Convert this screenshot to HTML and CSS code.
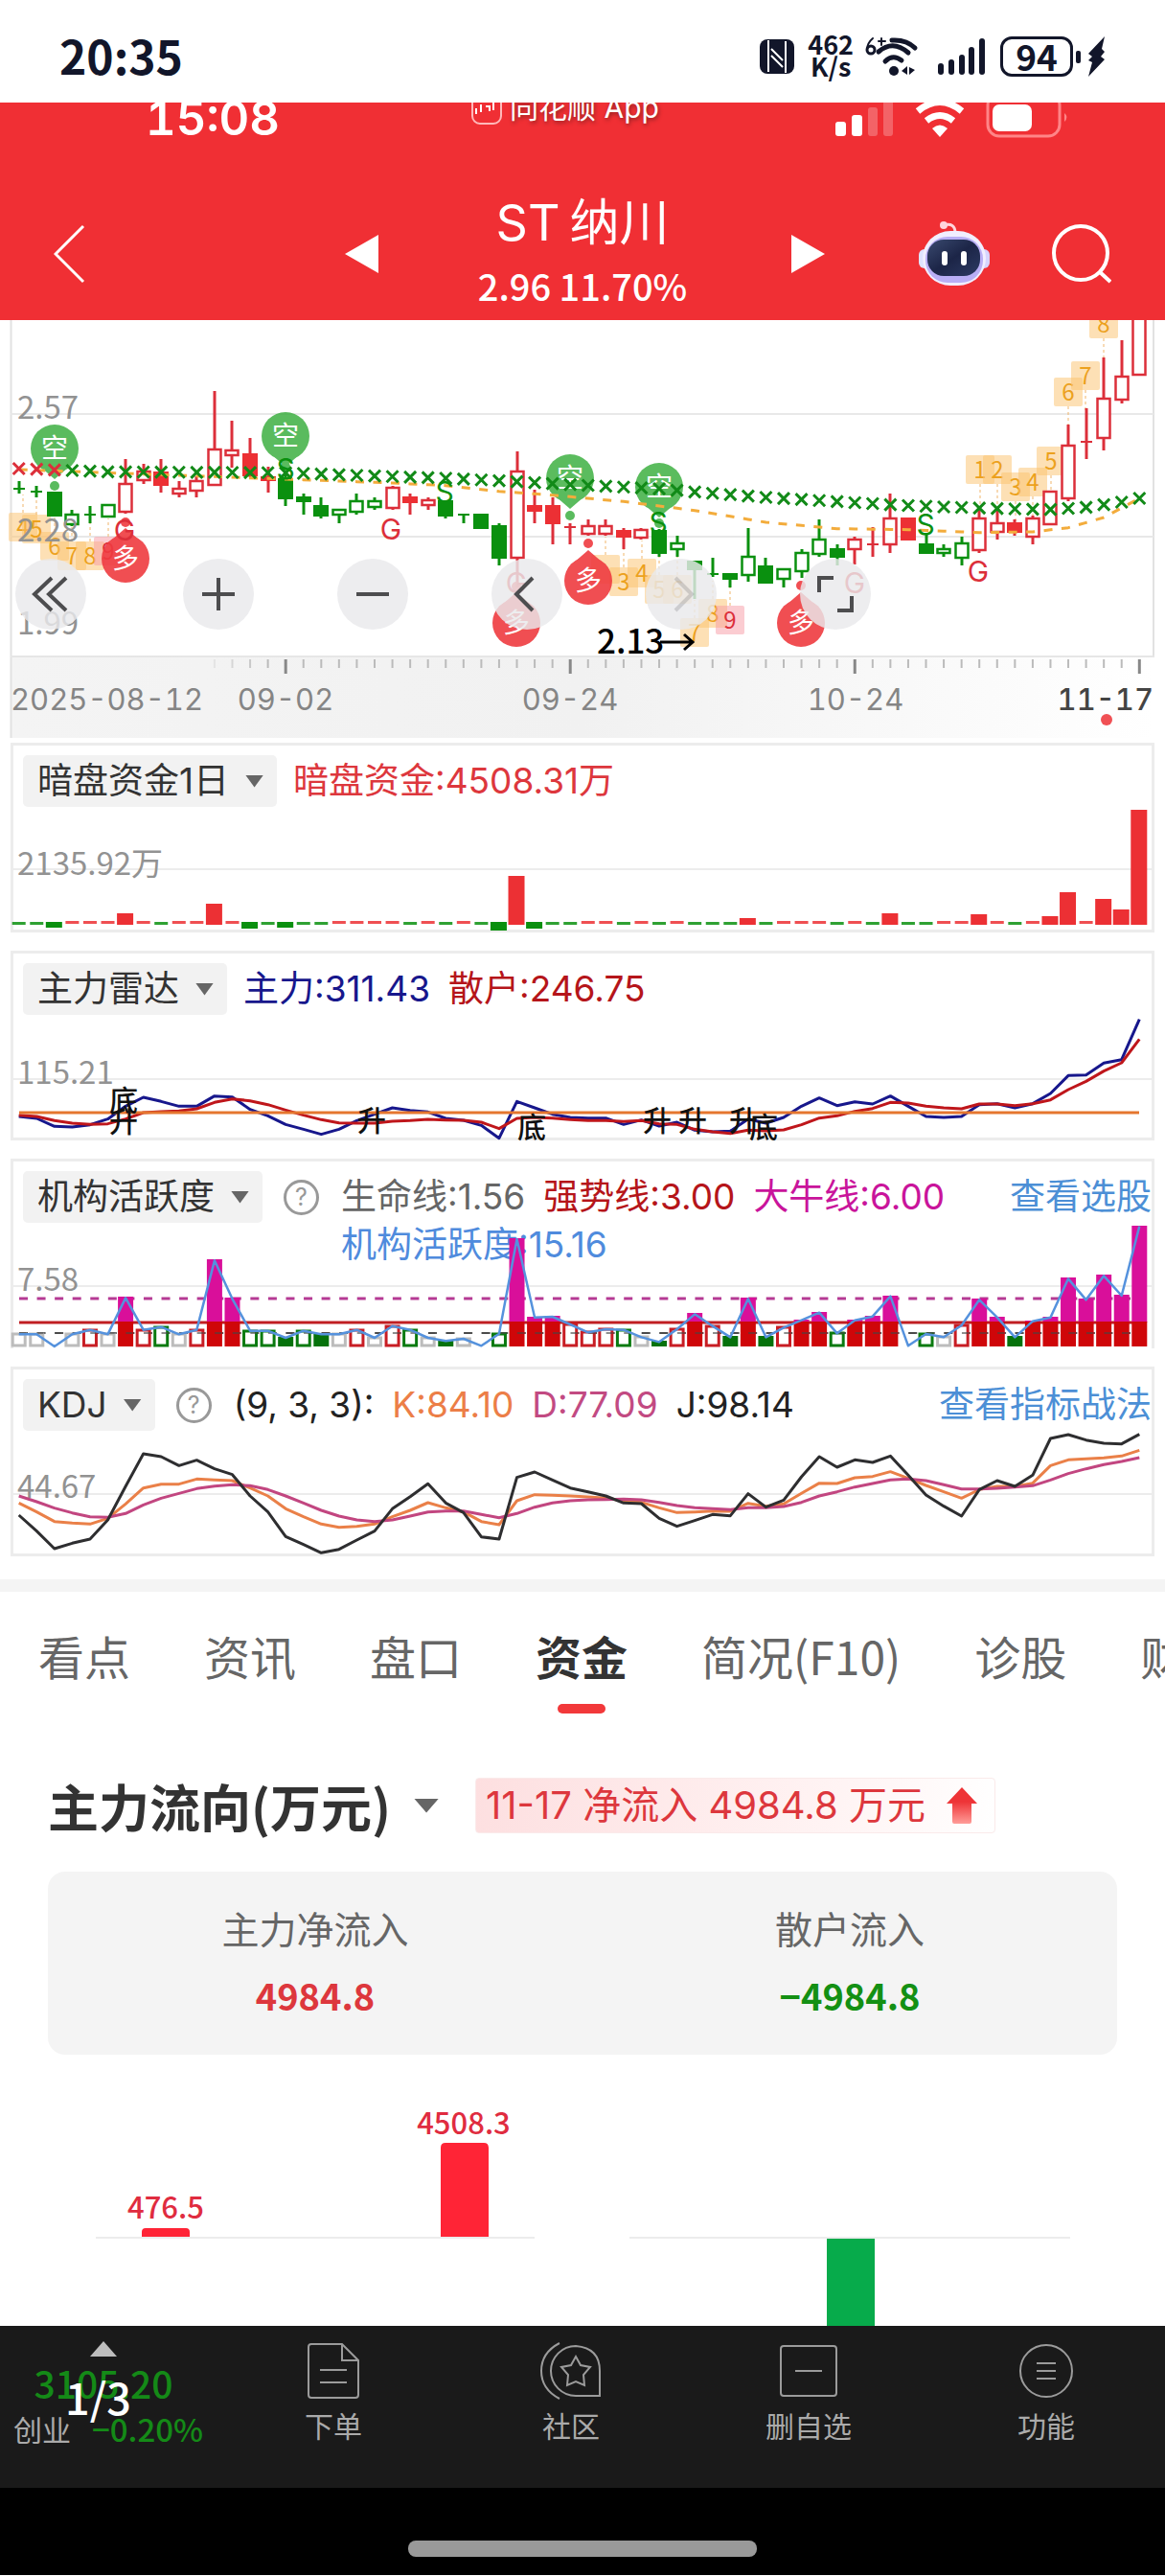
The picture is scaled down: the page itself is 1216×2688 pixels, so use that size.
FILE: index.html
```html
<!DOCTYPE html>
<html lang="zh-CN">
<head>
<meta charset="utf-8">
<meta name="viewport" content="width=device-width, initial-scale=1">
<title>ST纳川</title>
<link rel="stylesheet" href="styles.css">
</head>
<body>
<div class="status">
  <span class="status-time">20:35</span>
  <svg class="status-nfc" width="36" height="36" viewBox="0 0 36 36"><rect width="36" height="36" rx="8" fill="#12162a"/><path d="M9 1v33M27 2v33M12 10l12 12M12 17l12 12" stroke="#fff" stroke-width="2" fill="none"/></svg>
  <span class="status-speed">462<br>K/s</span>
  <svg class="status-wifi" width="56" height="44" viewBox="0 0 56 44" fill="none" stroke="#12162a" stroke-width="5" stroke-linecap="round"><path d="M28 5Q43 4 52 13M14 17Q29 4 45 18M21 27Q29 19 38 26"/><circle cx="30" cy="37" r="5" fill="#12162a" stroke="none"/><path d="M38 37l6-5v9zM46 33v8l6-5z" fill="#12162a" stroke="none"/><path d="M8 3Q2 8 2 15M14 6h7M17 3v7" stroke-width="2"/><circle cx="6" cy="15" r="4" stroke-width="3"/></svg>
  <svg class="status-signal" width="50" height="38" viewBox="0 0 50 38" fill="#12162a"><rect y="26" width="6" height="12" rx="3"/><rect x="11" y="22" width="6" height="16" rx="3"/><rect x="22" y="17" width="6" height="21" rx="3"/><rect x="32" y="9" width="6" height="29" rx="3"/><rect x="43" width="6" height="38" rx="3"/></svg>
  <span class="status-battery">94</span>
  <svg class="status-bolt" width="32" height="42" viewBox="0 0 32 42" fill="#12162a"><rect y="15" width="5" height="13" rx="2"/><path d="M30 0L13 18l4 3-4 4 4 2-4 15 17-18-4-3 4-5-3-3z"/></svg>
</div>

<header class="top">
  <div class="ios">
    <span class="ios-time">15:08</span>
    <span class="ios-app"><svg width="32" height="30" viewBox="0 0 32 30" fill="none" stroke="#ffb9ba" stroke-width="2"><rect x="1" y="-12" width="30" height="34" rx="8"/><path d="M5 6v6M10 2v8M15 4h4v5M23 0v8" stroke="#fff"/></svg>同花顺 App</span>
    <svg class="ios-icons" width="246" height="38" viewBox="870 107 246 38"><g fill="#fff"><rect x="872" y="127" width="11" height="15" rx="3"/><rect x="889" y="120" width="11" height="22" rx="3"/><g opacity=".25"><rect x="906" y="112" width="10" height="30" rx="3"/><rect x="922" y="100" width="10" height="42" rx="3"/></g><path d="M973 134q8-7 16 0l-8 9z"/><rect x="1036" y="109" width="41" height="28" rx="7"/></g><path d="M967 126q14-11 28 0M958 116q23-19 46 0" fill="none" stroke="#fff" stroke-width="7"/><rect x="1031" y="98" width="75" height="44" rx="12" fill="none" stroke="#ff8587" stroke-width="3"/><path d="M1111 118q5 4 0 9z" fill="#ff8587"/></svg>
  </div>
  <div class="nav">
    <div class="nav-left">
      <button aria-label="返回"><svg width="34" height="62" viewBox="0 0 34 62"><path d="M31 2L2 31l29 29" fill="none" stroke="#fff" stroke-width="3"/></svg></button>
      <button aria-label="上一只"><svg width="35" height="40" viewBox="0 0 35 40"><path d="M35 0v40L0 20z" fill="#fff"/></svg></button>
    </div>
    <div class="nav-title"><h1><span>ST</span><span>纳川</span></h1><p>2.96 11.70%</p></div>
    <div class="nav-right">
      <button aria-label="下一只"><svg width="35" height="40" viewBox="0 0 35 40"><path d="M0 0v40l35-20z" fill="#fff"/></svg></button>
      <button class="nav-robot" aria-label="助手"><svg width="76" height="70" viewBox="0 0 76 70"><defs><linearGradient id="face" x1="0" y1="0" x2="1" y2="1"><stop offset="0" stop-color="#3a4a70"/><stop offset=".5" stop-color="#1c2547"/><stop offset="1" stop-color="#2c3a63"/></linearGradient></defs><path d="M27 5q12-3 12 8" fill="none" stroke="#ffd5dc" stroke-width="3"/><circle cx="27" cy="5" r="4" fill="#ffd5dc"/><rect x="1" y="30" width="14" height="20" rx="6" fill="#dfe3ff"/><rect x="61" y="30" width="14" height="20" rx="6" fill="#d6d4ff"/><rect x="5" y="11" width="66" height="57" rx="29" fill="#f1eeff"/><rect x="8" y="17" width="60" height="48" rx="23" fill="#b9aef5"/><rect x="10" y="20" width="55" height="38" rx="17" fill="url(#face)"/><rect x="25" y="32" width="6" height="15" rx="3" fill="#fff"/><rect x="45" y="32" width="6" height="15" rx="3" fill="#fff"/></svg></button>
      <button aria-label="搜索"><svg width="62" height="62" viewBox="0 0 62 62" fill="none" stroke="#fff" stroke-width="4"><circle cx="30" cy="30" r="28"/><path d="M49 49l12 11"/></svg></button>
    </div>
  </div>
</header>

<main>
  <section class="kline">
    <svg id="kline" viewBox="0 334 1216 441" role="img" aria-label="日K线"></svg>
    <div class="tools">
      <button aria-label="最早"><svg viewBox="0 0 74 74"><path d="M38 20L20 37l18 17M53 20L35 37l18 17"/></svg></button>
      <button aria-label="放大"><svg viewBox="0 0 74 74"><path d="M37 20v34M20 37h34"/></svg></button>
      <button aria-label="缩小"><svg viewBox="0 0 74 74"><path d="M20 37h34"/></svg></button>
      <button aria-label="左移"><svg viewBox="0 0 74 74"><path d="M43 20L26 37l17 17"/></svg></button>
      <button aria-label="右移" disabled><svg viewBox="0 0 74 74"><path d="M31 20l17 17-17 17"/></svg></button>
      <button aria-label="全屏"><svg viewBox="0 0 74 74"><path d="M20 35V20h15M39 54h15V39"/></svg></button>
    </div>
  </section>

  <div class="panels">
    <section class="panel">
      <div class="panel-head"><button class="chip">暗盘资金1日<i class="caret"></i></button><div class="values"><span class="red">暗盘资金:4508.31万</span></div></div>
      <svg id="funds" viewBox="11 775 1194 198"></svg>
    </section>
    <section class="panel">
      <div class="panel-head"><button class="chip">主力雷达<i class="caret"></i></button><div class="values"><span class="navy">主力:311.43</span><span class="dark-red">散户:246.75</span></div></div>
      <svg id="radar" viewBox="11 991 1194 198"></svg>
    </section>
    <section class="panel">
      <div class="panel-head"><button class="chip">机构活跃度<i class="caret"></i></button><button class="help" aria-label="说明">?</button><div class="values"><span class="grey">生命线:1.56</span><span class="dark-red">强势线:3.00</span><span class="magenta">大牛线:6.00</span><span class="blue wrap">机构活跃度:15.16</span></div><a href="#stocks">查看选股</a></div>
      <svg id="active" viewBox="11 1208 1194 198"></svg>
    </section>
    <section class="panel">
      <div class="panel-head"><button class="chip">KDJ<i class="caret"></i></button><button class="help" aria-label="说明">?</button><div class="values"><span class="black">(9, 3, 3):</span><span class="orange">K:84.10</span><span class="pink">D:77.09</span><span class="black">J:98.14</span></div><a href="#kdj-guide">查看指标战法</a></div>
      <svg id="kdj" viewBox="11 1425 1194 198"></svg>
    </section>
  </div>

  <nav class="tabs">
    <a href="#view">看点</a><a href="#news">资讯</a><a href="#quote">盘口</a><a class="active" href="#money" aria-current="page">资金</a><a href="#f10">简况(F10)</a><a href="#diagnose">诊股</a><a href="#finance">财务</a>
  </nav>

  <section class="flow">
    <div class="flow-head">
      <h2>主力流向(万元)</h2><i class="caret"></i>
      <p class="tag">11-17 净流入 4984.8 万元<svg width="32" height="38" viewBox="0 0 32 38"><defs><linearGradient id="up" x1="0" y1="0" x2="0" y2="1"><stop offset=".4" stop-color="#ee3437"/><stop offset="1" stop-color="#ff9c98"/></linearGradient></defs><path d="M16 0l16 17h-6v19q0 2-2 2H8q-2 0-2-2V17H0z" fill="url(#up)"/></svg></p>
    </div>
    <dl class="card">
      <div><dt>主力净流入</dt><dd class="red">4984.8</dd></div>
      <div><dt>散户流入</dt><dd class="green">−4984.8</dd></div>
    </dl>
  </section>
  <svg class="bars" viewBox="0 2145 1216 283">
    <path d="M100 2336h458M657 2336h460" stroke="#ececec" stroke-width="2"/>
    <path d="M148 2335v-5q0-4 4-4h42q4 0 4 4v5zM460 2335v-93q0-5 5-5h40q5 0 5 5v93z" fill="#ff2436"/>
    <path d="M863 2337h50v91h-50z" fill="#07ab4b"/>
    <g class="bar-label"><text x="173" y="2316">476.5</text><text x="484" y="2228">4508.3</text></g>
  </svg>
</main>

<footer>
  <div class="dock">
    <div class="index">
      <svg width="28" height="16" viewBox="0 0 28 16"><path d="M14 0l14 16H0z" fill="#bdbdbd"/></svg>
      <strong>3105.20</strong>
      <p><span>创业</span><em>−0.20%</em></p>
      <span class="pager">1/3</span>
    </div>
    <button><svg width="54" height="58" viewBox="0 0 54 58"><path d="M4 1h32l17 17v36q0 3-3 3H4q-3 0-3-3V4q0-3 3-3zM36 1v17h17M13 28h28M13 41h28"/></svg>下单</button>
    <button><svg width="64" height="60" viewBox="0 0 64 60"><path d="M20 1Q1 11 1 30t19 29M37 4a26 26 0 1 0 0 52h25V30Q62 6 37 4z"/><path d="M37 15l5 9 10 2-7 8 1 11-9-4-9 4 1-11-7-8 10-2z"/></svg>社区</button>
    <button><svg width="60" height="58" viewBox="0 0 60 58"><rect x="1" y="3" width="58" height="52" rx="3"/><path d="M16 29h28"/></svg>删自选</button>
    <button><svg width="58" height="58" viewBox="0 0 58 58"><circle cx="29" cy="29" r="27"/><path d="M19 21h20M19 29h20M19 37h20"/></svg>功能</button>
  </div>
  <div class="home"><i></i></div>
</footer>
<script src="charts.js"></script>
</body>
</html>
```
FILE: styles.css
```css
* { box-sizing: border-box; margin: 0; padding: 0; }
body { background: #fff; color: #333; font-family: Inter, "Noto Sans CJK SC", sans-serif; font-size: 36px; overflow-x: hidden; }
button { border: 0; background: none; font: inherit; color: inherit; cursor: pointer; }
a { text-decoration: none; color: inherit; }
svg { display: block; }
i, em { font-style: normal; }

.status { display: flex; align-items: center; height: 107px; padding: 10px 61px 0 62px; color: #12162a; font-family: "Noto Sans CJK SC", sans-serif; font-weight: 700; }
.status-time { margin: 0 auto 4px 0; font-size: 48px; line-height: 48px; }
.status-speed { margin: 0 12px 4px 14px; font-size: 27px; line-height: 23px; text-align: center; }
.status-signal { margin: 0 15px 0 20px; }
.status-battery { width: 76px; height: 42px; margin-right: 3px; border: 3px solid; border-radius: 12px; font-size: 37px; line-height: 34px; text-align: center; }

.top { background: #f02f34; color: #fff; overflow: hidden; }
.ios { display: flex; justify-content: space-between; align-items: flex-start; height: 89px; padding: 0 100px 0 152px; }
.ios-time { font-size: 49px; font-weight: 600; line-height: 34px; font-variant-numeric: tabular-nums; }
.ios-app { display: flex; align-items: flex-start; gap: 8px; margin-left: 18px; font-size: 30px; line-height: 10px; text-shadow: 1px 2px 4px #8a2022; }
.nav { display: grid; grid-template-columns: 1fr auto 1fr; align-items: center; height: 138px; }
.nav button { display: block; }
.nav-left { display: flex; justify-content: space-between; padding: 0 104px 0 56px; }
.nav-title { padding-bottom: 8px; text-align: center; }
.nav-title h1 { display: flex; justify-content: center; gap: 10px; font-size: 52px; font-weight: 400; line-height: 74px; }
.nav-title p { font-family: "Noto Sans CJK SC", sans-serif; font-size: 38px; font-weight: 500; line-height: 56px; }
.nav-right { display: flex; align-items: center; gap: 64px; padding: 0 56px 0 109px; }
.nav-robot { margin-left: auto; }

.kline { position: relative; }
.kline > svg { width: 100%; }
.tools { position: absolute; left: 16px; top: 249px; display: flex; gap: 87px; }
.tools button { width: 74px; height: 74px; border-radius: 50%; background: rgba(233, 233, 235, .82); }
.tools button:first-child { margin-right: 14px; }
.tools path { fill: none; stroke: #4d4d4f; stroke-width: 4; }
.tools button:disabled path { opacity: .2; }

text { font-family: "Noto Sans CJK SC", sans-serif; }
.axis { font-size: 33px; fill: #929292; }
.date { font-family: Inter, sans-serif; font-size: 31px; font-variant-numeric: tabular-nums; fill: #858585; }
.date-now { font-weight: 500; fill: #444; }
.price { font-size: 35px; font-weight: 500; fill: #000; }
.mark { font-family: Inter, sans-serif; font-size: 30px; text-anchor: middle; }
.bubble { font-size: 28px; fill: #fff; text-anchor: middle; }
.count { font-size: 24px; text-anchor: middle; }
.sign { font-size: 30px; font-weight: 500; text-anchor: middle; fill: #111; }

.panels { display: grid; gap: 19px; padding: 0 11px; }
.panel { display: grid; box-shadow: inset 0 0 0 3px #ececec; }
.panel > * { grid-area: 1 / 1; min-width: 0; }
.panel > svg { width: 100%; pointer-events: none; z-index: 1; }
.panel-head { display: flex; align-items: flex-start; padding: 13px 3px 0 13px; line-height: 54px; white-space: nowrap; }
.chip { display: flex; align-items: center; gap: 17px; padding: 0 14px 0 15px; border-radius: 5px; background: #f2f2f2; font-size: 37px; line-height: 54px; }
.caret { width: 19px; height: 13px; background: #666; clip-path: polygon(0 0, 100% 0, 50% 100%); }
.help { width: 37px; height: 37px; margin: 9px 6px 0 22px; border: 3px solid #999; border-radius: 50%; color: #999; font-size: 25px; line-height: 31px; }
.values { display: flex; flex-wrap: wrap; flex: 1; column-gap: 19px; padding-left: 17px; font-size: 37px; white-space: nowrap; }
.wrap { flex-basis: 100%; line-height: 46px; }
.panel-head a { font-size: 37px; color: #4c8fd6; }
.red { color: #dd373d; }
.navy { color: #17178c; }
.dark-red { color: #b5151a; }
.grey { color: #666; }
.magenta { color: #c9149b; }
.blue { color: #4f8bdd; }
.black { color: #222; }
.orange { color: #ec7e47; }
.pink { color: #c24a82; }
.green { color: #149014; }

.tabs { display: flex; gap: 77px; margin-top: 24px; padding: 31px 0 0 40px; border-top: 13px solid #f4f4f4; overflow: hidden; color: #666; font-family: "Noto Sans CJK SC", sans-serif; font-size: 48px; line-height: 70px; white-space: nowrap; }
.tabs .active { color: #333; font-weight: 700; }
.tabs .active::after { content: ""; display: block; width: 50px; height: 10px; margin: 16px auto 0; border-radius: 5px; background: #f2383a; }

.flow { padding: 67px 50px 0; }
.flow-head { display: flex; align-items: center; }
.flow h2 { font-family: "Noto Sans CJK SC", sans-serif; font-size: 53px; font-weight: 700; line-height: 58px; }
.flow-head .caret { width: 26px; height: 15px; margin: 0 38px 0 24px; }
.tag { display: flex; align-items: center; gap: 22px; padding: 0 18px 0 10px; border: 1px solid #faeaea; border-radius: 4px; background: linear-gradient(100deg, #fddfe0, #fff4f4 70%, #fff); color: #dd373d; font-size: 40px; line-height: 56px; }
.card { display: grid; grid-template-columns: 1fr 1fr; margin-top: 40px; padding: 26px 0 28px; border-radius: 18px; background: #f4f4f4; font-size: 39px; line-height: 69px; text-align: center; }
.card dt { color: #666; }
.card dd { font-family: "Noto Sans CJK SC", sans-serif; font-size: 38px; font-weight: 700; line-height: 68px; }
.bars { width: 100%; }
.bar-label { font-size: 31px; font-weight: 500; fill: #e02c40; text-anchor: middle; }

footer { background: #000; }
.dock { display: grid; grid-template-columns: 224fr 248fr 248fr 248fr 248fr; height: 169px; background: #1a1a1a; color: #aaa; font-size: 30px; line-height: 40px; }
.dock button { display: flex; flex-direction: column; align-items: center; gap: 8px; padding-top: 17px; }
.dock button svg { height: 60px; fill: none; stroke: #9b9b9b; stroke-width: 2; }
.index { position: relative; display: flex; flex-direction: column; align-items: center; padding: 16px 8px 0 0; font-family: "Noto Sans CJK SC", sans-serif; }
.index strong { margin-top: 7px; color: #148a17; font-size: 39px; font-weight: 500; }
.index p { display: flex; gap: 22px; margin: 8px 0 0 10px; white-space: nowrap; }
.index em { color: #148a17; font-size: 33px; font-weight: 500; }
.pager { position: absolute; left: 68px; top: 49px; color: #fff; font-size: 45px; font-weight: 500; line-height: 50px; }
.home { height: 91px; padding-top: 55px; }
.home i { display: block; width: 364px; height: 17px; margin: 0 auto; border-radius: 8px; background: #999; }
```
FILE: charts.js
```js
const RED = '#dc2f3a', SOLID = '#ec3034', GREEN = '#0a900f';
const X = i => 19.7 + 18.565 * i;
const draw = (id, parts) => { document.getElementById(id).innerHTML = parts.join(''); };
const rect = (x, y, w, h, a) => `<rect x="${x}" y="${y}" width="${w}" height="${h}" ${a}/>`;
const text = (x, y, s, a) => `<text x="${x}" y="${y}" ${a}>${s}</text>`;
const line = (x1, y1, x2, y2, c, w, a = '') => `<line x1="${x1}" y1="${y1}" x2="${x2}" y2="${y2}" stroke="${c}" stroke-width="${w}" ${a}/>`;
const curve = (v, y0, c, w, a = '') => `<polyline points="${v.map((n, i) => X(i) + ',' + (y0 + n / 3)).join(' ')}" fill="none" stroke="${c}" stroke-width="${w}" stroke-linejoin="round" ${a}/>`;
const nums = s => s.trim().split(/\s+/).map(Number);

/* Fill a sparse list of [index, value] into one value per day. */
function spread(keys) {
  const out = [];
  for (let k = 0; k < keys.length - 1; k++) {
    const [a, va] = keys[k], [b, vb] = keys[k + 1];
    for (let i = a; i < b; i++) out.push(va + (vb - va) * (i - a) / (b - a));
  }
  out.push(keys[keys.length - 1][1]);
  return out;
}

/* Candles: colour (r/g), kind (h hollow, f filled, l line), body top, body bottom, wick top, wick bottom. */
const candles = `gl 540 540 517 555|gl 548 548 530 568|gf 550 626 550 626|gh 620 650 605 658|gl 620 620 595 648|gh 592 628 592 628|rh 524 612 448 618|rh 485 512 462 525|rf 485 530 448 553|rh 540 555 515 567|rh 515 545 500 567|rh 418 528 235 530|rh 419 435 328 475|rf 430 500 380 505|rf 500 516 470 553|gf 508 572 490 594|gf 563 583 555 620|gf 592 626 568 634|gh 606 622 606 647|gh 578 612 555 620|gh 580 597 568 607|rh 538 600 530 607|rf 563 585 555 620|rh 577 592 568 607|gf 577 626 577 634|gl 620 620 620 647|gf 617 665 617 665|gf 655 758 648 780|rh 485 755 422 850|rf 590 612 543 648|rf 590 650 568 713|rl 660 660 648 713|rh 658 680 635 688|rh 658 680 635 688|rf 670 692 662 728|rh 670 692 662 700|gf 670 745 665 752|gh 710 730 688 752|gf 765 795 765 885|gl 808 808 755 815|gf 803 825 803 850|gh 752 810 662 832|gf 780 838 755 838|gh 793 822 793 848|gh 740 797 730 820|gh 700 743 635 753|gf 725 757 714 780|rh 700 730 690 778|rl 714 714 660 753|rh 632 715 555 742|rf 630 703 630 703|gf 710 745 680 745|gh 730 740 714 753|gh 712 757 690 780|rh 632 732 600 740|rh 647 675 610 700|rf 645 677 635 686|rh 632 690 625 713|rh 550 650 550 650|rh 405 570 340 578|rl 394 394 287 446|rh 258 382 128 420|rh 190 262 75 272|rh 0 182 0 182`.split('|');

function kline() {
  const Y = v => 330 + v / 3, p = [];
  p.push('<defs><linearGradient id="fade"><stop offset="0" stop-color="#f4f4f4"/><stop offset=".5" stop-color="#f1f1f1"/><stop offset="1" stop-color="#fff"/></linearGradient></defs>');
  p.push(rect(11, 685, 1194, 85, 'fill="url(#fade)"'), line(11.5, 334, 11.5, 770, '#e2e2e2', 2), line(1204, 334, 1204, 686, '#e2e2e2', 2), line(11, 685, 1205, 685, '#e6e6e6', 2));
  p.push(line(11, 432, 1204, 432, '#e8e8e8', 2), line(11, 560, 1204, 560, '#e8e8e8', 2));
  const boxes = [[24, 550, 4], [38, 552, 5], [57, 570, 6], [75, 580, 7], [94, 580, 8], [113, 575, 9], [632, 594, ''], [651, 607, 3], [670, 598, 4], [688, 615, 5], [707, 615, 6], [725, 660, 7], [744, 640, 8], [762, 647, 9], [1023, 490, 1], [1041, 490, 2], [1060, 508, 3], [1078, 503, 4], [1097, 481, 5], [1115, 409, 6], [1133, 392, 7], [1152, 338, 8]];
  for (const [x, y, n] of boxes) {
    const pink = n === 9, up = y < 530;
    p.push(rect(x - 15, y - 15, 30, 30, `rx="2" fill="${pink ? '#f79aa4' : '#fbc26c'}" opacity=".5"`));
    p.push(line(x, up ? y + 15 : y - 15, x, up ? y + 38 : y - 34, '#f0b56a', 1, 'stroke-dasharray="3 3"'));
    p.push(text(x, y + 9, n, `class="count" fill="${pink ? '#dc2f3a' : '#eca11e'}"`));
  }
  candles.forEach((row, i) => {
    const [k, a, b, c, d] = row.split(' '), red = k[0] === 'r', col = red ? RED : GREEN, x = Math.round(X(i));
    const [t, u, w, z] = [a, b, c, d].map(v => Math.round(Y(+v)));
    p.push(line(x, w, x, z, col, 3));
    if (k[1] === 'l') p.push(line(x - 6, t, x + 6, t, col, 2));
    else if (k[1] === 'f') p.push(rect(x - 8, t, 16, Math.max(u - t, 3), `fill="${red ? SOLID : GREEN}"`));
    else p.push(rect(x - 6.5, t, 13, Math.max(u - t, 3), `fill="#fff" stroke="${col}" stroke-width="2.500"`));
  });
  p.push(text(18, 437, '2.57', 'class="axis"'), text(18, 565, '2.28', 'class="axis"'), text(18, 662, '1.99', 'class="axis"'));
  for (const [x, y, ty] of [[57, 468, 507], [298, 455, 487], [595, 499, 538], [688, 508, 546]])
    p.push(`<g opacity=".82"><circle cx="${x}" cy="${y}" r="25" fill="#37ad3b"/><path d="M${x - 15} ${y + 19}L${x} ${y + 32}l15-13z" fill="#37ad3b"/><circle cx="${x}" cy="${ty}" r="5" fill="#37ad3b"/></g>`, text(x, y + 10, '空', 'class="bubble"'));
  for (const [x, y, ty] of [[131, 583, 545], [539, 650, 612], [614, 606, 567], [836, 650, 611]])
    p.push(`<g opacity=".9"><circle cx="${x}" cy="${y}" r="25" fill="#ef3b40"/><path d="M${x - 15} ${y - 19}L${x} ${y - 32}l15 13z" fill="#ef3b40"/><circle cx="${x}" cy="${ty}" r="5" fill="#ef3b40"/></g>`, text(x, y + 10, '多', 'class="bubble"'));
  p.push(curve(spread([[0, 480], [10, 500], [21, 522], [24, 530], [27, 548], [30, 560], [34, 580], [38, 608], [42, 645], [46, 665], [50, 668], [54, 677], [57, 675], [59, 662], [61, 630], [63, 570]]), 330, '#f3ac3c', 3, 'stroke-dasharray="9 9.500"'));
  spread([[0, 477], [3, 483], [5, 487], [15, 490], [20, 500], [24, 507], [27, 515], [31, 527], [36, 540], [38, 550], [42, 567], [46, 580], [49, 590], [52, 597], [55, 602], [58, 605], [60, 598], [62, 582], [63, 570]]).forEach((v, i) => {
    p.push(`<path d="M${X(i) - 6} ${Y(v) - 6}l12 12m0-12l-12 12" stroke="${i < 3 ? RED : '#128a18'}" stroke-width="3"/>`);
  });
  for (const [x, y] of [[130, 564], [408, 563], [539, 619], [892, 619], [1021, 607]]) p.push(text(x, y, 'G', `class="mark" fill="${RED}"`));
  for (const [x, y] of [[298, 500], [464, 524], [687, 556], [966, 558]]) p.push(text(x, y, 'S', `class="mark" fill="${GREEN}"`));
  p.push(text(623, 682, '2.13', 'class="price"'), '<path d="M689 670h34m-9-8l9 8-9 8" fill="none" stroke="#000" stroke-width="3"/>');
  for (let i = 11; i < 64; i++) {
    const major = i % 16 === 15;
    p.push(line(X(i), 688, X(i), major ? 703 : 697, major ? '#888' : '#bbb', major ? 3 : 2, i < 14 ? `opacity="${(i - 10) / 4}"` : ''));
  }
  p.push(text(11, 741, '2025-08-12', 'class="date"'));
  [[298, '09-02'], [595, '09-24'], [893, '10-24']].forEach(([x, s]) => p.push(text(x, 741, s, 'class="date" text-anchor="middle"')));
  p.push(text(1204, 741, '11-17', 'class="date date-now" text-anchor="end"'), '<circle cx="1155" cy="751" r="6" fill="#f05054"/>');
  draw('kline', p);
}

/* Net funds per day, ten days to a row: r/g without a number is a flat day. */
function funds() {
  const p = [line(14, 907, 1202, 907, '#ececec', 2), text(18, 913, '2135.92万', 'class="axis"')];
  const days = `g g g6 r r r r12 r g r
    r r22 r g7 g g6 g g r r
    r r g r g r g g9 r51 g7
    g g r r g r g r g g
    g r7 g r r r g r g r12
    g g r r r11 r g r r9 r34
    r r27 r16 r120`.split(/\s+/);
  days.forEach((s, i) => {
    const h = +s.slice(1), c = s[0] === 'r' ? SOLID : GREEN, x = X(i);
    if (!h) p.push(rect(x - 7, s[0] === 'r' ? 961 : 962, 14, 3, `fill="${c}" opacity=".85"`));
    else p.push(rect(x - 9, s[0] === 'r' ? 965 - h : 962, 17, h, `fill="${c}"`));
  });
  draw('funds', p);
}

function radar() {
  const main = nums('1182 1188 1213 1215 1208 1190 1150 1122 1135 1150 1150 1118 1121 1160 1180 1207 1222 1238 1222 1195 1175 1155 1163 1168 1188 1194 1210 1250 1135 1155 1175 1185 1187 1187 1207 1193 1212 1200 1225 1230 1228 1190 1203 1185 1150 1124 1148 1136 1143 1118 1150 1182 1185 1182 1145 1142 1155 1142 1110 1054 1052 1015 1004 878');
  const retail = nums('1178 1182 1195 1203 1207 1205 1190 1170 1167 1165 1158 1138 1127 1133 1145 1162 1178 1192 1202 1203 1203 1197 1195 1191 1193 1194 1200 1220 1188 1185 1187 1192 1195 1195 1198 1195 1205 1207 1222 1230 1235 1225 1227 1224 1208 1187 1180 1166 1157 1138 1140 1150 1155 1158 1143 1143 1148 1142 1130 1098 1072 1040 1014 940');
  const p = [line(14, 1125, 1202, 1125, '#ececec', 2), text(18, 1130, '115.21', 'class="axis"')];
  p.push(curve(main, 770, '#17178c', 3), curve(retail, 770, '#bf161b', 3), line(20, 1160, 1189, 1160, '#e5762f', 3));
  [[129, 1158, '底'], [129, 1180, '升'], [388, 1179, '升'], [555, 1186, '底'], [686, 1179, '升'], [723, 1179, '升'], [776, 1179, '升'], [797, 1186, '底']].forEach(([x, y, s]) => p.push(text(x, y, s, 'class="sign"')));
  draw('radar', p);
}

/* Activity: a grey, r/g hollow, G green filled, F strong, n none. */
function active() {
  const days = 'a571 a571 n609 a571 r557 a571 F457 r557 g548 a571 r557 F340 F460 g560 g560 G582 g560 G571 a571 r557 a582 r545 g557 a582 G592 a585 n607 g569 F273 F518 F516 r540 r565 r555 g557 a580 G595 r555 F508 r545 G580 F460 G580 r550 F527 F503 g568 F527 F515 F452 n607 g570 a580 r543 F463 F518 G580 F530 F518 F397 F463 F388 F450 F233'.split(' ');
  const Y = v => Math.round(1200 + v / 3), base = 1404;
  const p = [line(14, 1341, 1202, 1341, '#ececec', 2), line(14, 1405, 1202, 1405, '#fff', 4), text(18, 1346, '7.58', 'class="axis"')];
  p.push(line(20, 1354, 1189, 1354, '#b53a94', 3, 'stroke-dasharray="9 9.565"'), line(20, 1390, 1189, 1390, '#555', 2, 'stroke-dasharray="9 9.565"'), line(20, 1379, 1189, 1379, '#c01e22', 3));
  days.forEach((s, i) => {
    const k = s[0], y = Y(+s.slice(1)), x = X(i);
    if (k === 'n') return;
    if (k === 'F') {
      p.push(rect(x - 8, y, 16, 1379 - y, 'fill="#d90f9a"'), rect(x - 8, 1378, 16, base - 1378, 'fill="#cf0609"'));
    } else if (k === 'G') p.push(rect(x - 8, y, 16, base - y, 'fill="#06720c"'));
    else p.push(rect(x - 6.5, y + 1, 13, base - y - 2, `fill="#fff" stroke="${{ a: '#bcbcbc', r: '#c81d24', g: '#0a7a10' }[k]}" stroke-width="3"`));
  });
  p.push(line(20, 1390, 1189, 1390, '#444', 2, 'stroke-dasharray="7 11.565" opacity=".6"'));
  p.push(curve(days.map(s => +s.slice(1)), 1201, '#5592dd', 2.5));
  draw('active', p);
}

function kdj() {
  const j = nums('1140 1190 1245 1228 1215 1155 1050 948 957 985 968 995 1013 1080 1130 1207 1232 1258 1247 1218 1190 1120 1082 1042 1102 1132 1208 1215 1022 1005 1030 1055 1067 1080 1102 1104 1150 1175 1157 1138 1142 1073 1115 1093 1020 957 990 967 975 955 1015 1077 1112 1143 1060 1032 1050 1015 900 888 905 915 917 887');
  const k = nums('1102 1130 1160 1165 1168 1150 1105 1055 1043 1043 1027 1030 1032 1055 1080 1120 1145 1168 1178 1175 1168 1145 1125 1101 1117 1130 1160 1170 1095 1076 1078 1080 1083 1087 1095 1100 1117 1132 1130 1127 1128 1103 1112 1105 1072 1040 1041 1023 1019 1004 1025 1047 1067 1087 1060 1050 1050 1040 985 967 964 961 955 937');
  const d = nums('1080 1098 1118 1133 1145 1147 1135 1108 1087 1072 1057 1049 1045 1048 1060 1080 1102 1125 1143 1155 1160 1155 1143 1130 1127 1127 1138 1148 1135 1115 1102 1095 1092 1091 1090 1092 1100 1110 1117 1120 1123 1117 1117 1113 1100 1080 1067 1052 1041 1030 1027 1032 1045 1058 1058 1056 1052 1048 1030 1010 995 982 972 960');
  draw('kdj', [line(14, 1558, 1202, 1558, '#ececec', 2), text(18, 1562, '44.67', 'class="axis"'), curve(k, 1200, '#ea8048', 3), curve(d, 1200, '#c24680', 3), curve(j, 1200, '#2e2e30', 3)]);
}

kline();
funds();
radar();
active();
kdj();
```
